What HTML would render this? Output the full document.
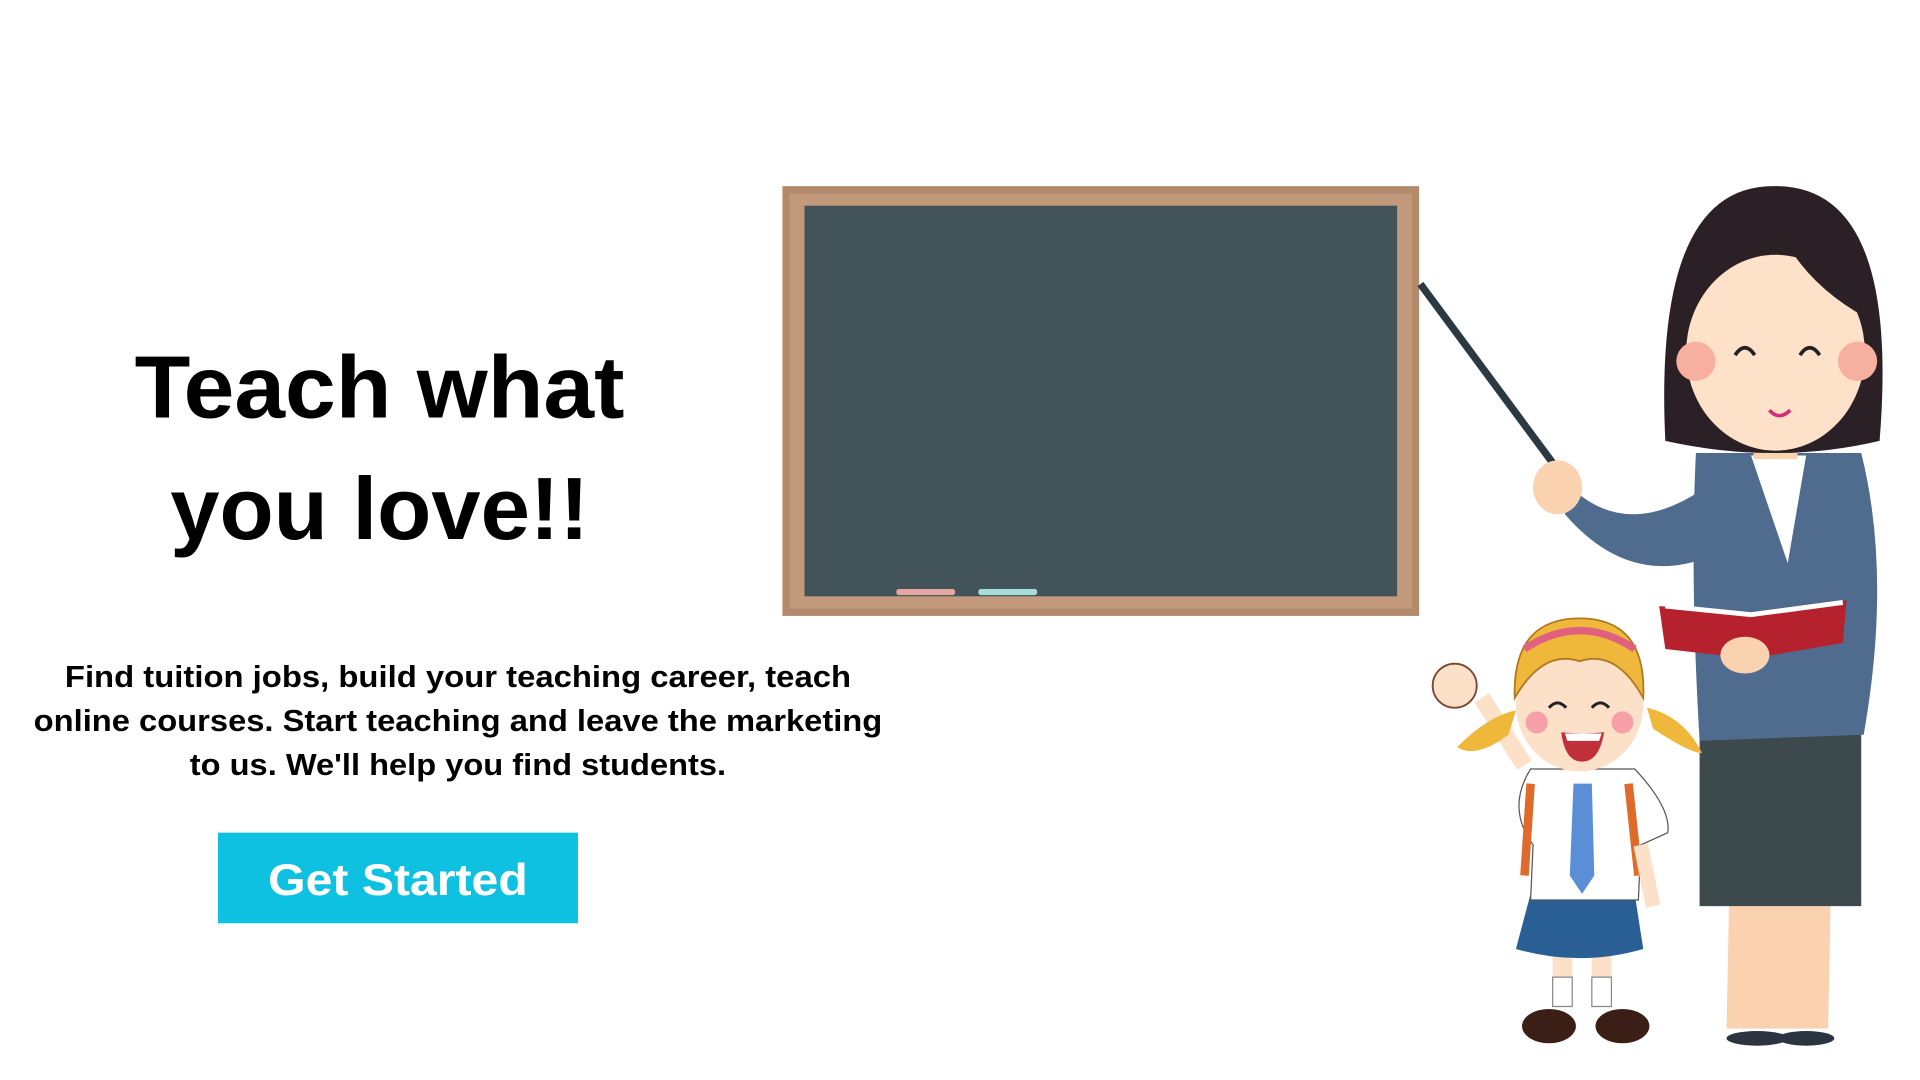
<!DOCTYPE html>
<html><head><meta charset="utf-8"><style>
html,body{margin:0;padding:0;background:#fff;width:1920px;height:1080px;overflow:hidden}
svg{display:block}
text{font-family:"Liberation Sans",sans-serif;font-weight:bold}
</style></head><body>
<svg width="1920" height="1080" viewBox="0 0 1568 882" preserveAspectRatio="none">
<rect width="1568" height="882" fill="#fff"/>
<text x="310" y="341" font-size="72" text-anchor="middle" textLength="400" lengthAdjust="spacingAndGlyphs" fill="#000">Teach what</text>
<text x="310" y="440" font-size="72" text-anchor="middle" textLength="342" lengthAdjust="spacingAndGlyphs" fill="#000">you love!!</text>
<g font-size="25" fill="#000" text-anchor="middle">
<text x="374" y="561" textLength="642" lengthAdjust="spacingAndGlyphs">Find tuition jobs, build your teaching career, teach</text>
<text x="374" y="597" textLength="693" lengthAdjust="spacingAndGlyphs">online courses. Start teaching and leave the marketing</text>
<text x="374" y="633" textLength="438" lengthAdjust="spacingAndGlyphs">to us. We'll help you find students.</text>
</g>
<rect x="178" y="680" width="294" height="74" fill="#0fc1e0"/>
<text x="325" y="731" font-size="36" fill="#fff" text-anchor="middle" textLength="212" lengthAdjust="spacingAndGlyphs">Get Started</text>
<rect x="639" y="152" width="520" height="351" fill="#b48a6c"/>
<rect x="645" y="158" width="508" height="339" fill="#c29a7b"/>
<rect x="657" y="168" width="484" height="319" fill="#42535a"/>
<rect x="732" y="481" width="48" height="5" rx="2" fill="#e6a6a0"/>
<rect x="799" y="481" width="48" height="5" rx="2" fill="#a6dcdc"/>
<line x1="1160" y1="232" x2="1268" y2="378" stroke="#2b3a42" stroke-width="6"/>
<path d="M1410 840 L1412 740 L1495 740 L1493 840Z" fill="#fbd2b0"/>
<ellipse cx="1435" cy="848" rx="25" ry="6" fill="#2b3440"/>
<ellipse cx="1475" cy="848" rx="23" ry="6" fill="#2b3440"/>
<rect x="1388" y="598" width="132" height="142" fill="#3c4a4e"/>
<path d="M1385 370 L1520 370 Q1545 470 1522 600 L1388 605 Q1380 470 1385 370Z" fill="#4f6b8e"/>
<path d="M1430 372 L1475 372 L1460 460 Z" fill="#fff"/>
<path d="M1390 400 Q1330 440 1285 400 L1278 420 Q1330 480 1395 455Z" fill="#4f6b8e"/>
<ellipse cx="1272" cy="398" rx="20" ry="22" fill="#fbd2b0"/>
<path d="M1355 495 L1430 500 L1508 490 L1505 525 L1430 538 L1360 530Z" fill="#b5222e"/>
<path d="M1360 495 L1430 502 L1505 492" stroke="#fff" stroke-width="4" fill="none"/>
<ellipse cx="1425" cy="535" rx="20" ry="15" fill="#fbd2b0"/>
<rect x="1432" y="345" width="36" height="30" fill="#fbd2b0"/>
<path d="M1360 360 Q1350 150 1450 152 Q1552 152 1535 360 Q1450 380 1360 360Z" fill="#2b2026"/>
<ellipse cx="1450" cy="288" rx="73" ry="80" fill="#fde1c8"/>
<path d="M1378 260 Q1400 210 1450 180 Q1470 230 1525 260 Q1525 180 1450 175 Q1380 180 1378 260Z" fill="#2b2026"/>
<circle cx="1385" cy="295" r="16" fill="#f7b0a0"/>
<circle cx="1517" cy="295" r="16" fill="#f7b0a0"/>
<path d="M1417 290 Q1425 278 1433 290 M1470 290 Q1478 278 1486 290" stroke="#222" stroke-width="3" fill="none"/>
<path d="M1445 335 Q1453 344 1462 335" stroke="#d0307a" stroke-width="3" fill="none"/>
<path d="M1268 775 L1268 800 L1284 800 L1284 775Z M1300 775 L1300 800 L1316 800 L1316 775Z" fill="#fde0c8"/>
<path d="M1268 798 L1268 822 L1284 822 L1284 798Z M1300 798 L1300 822 L1316 822 L1316 798Z" fill="#fff" stroke="#888" stroke-width="1"/>
<ellipse cx="1265" cy="838" rx="22" ry="14" fill="#3b1f17"/>
<ellipse cx="1325" cy="838" rx="22" ry="14" fill="#3b1f17"/>
<path d="M1250 730 L1335 730 L1342 775 Q1290 790 1238 775Z" fill="#2a5f96"/>
<path d="M1250 628 L1335 628 Q1365 660 1362 680 L1340 690 L1338 735 L1250 735 L1252 690 Q1230 660 1250 628Z" fill="#fff" stroke="#555" stroke-width="1"/>
<path d="M1285 640 L1300 640 L1302 715 L1292 730 L1282 715Z" fill="#5a8fd8"/>
<path d="M1250 640 L1245 715 M1330 640 L1338 715" stroke="#e06a2a" stroke-width="7"/>
<path d="M1245 625 L1210 570" stroke="#fde0c8" stroke-width="14"/>
<circle cx="1188" cy="560" r="18" fill="#fde0c8" stroke="#7a4a30" stroke-width="1.5"/>
<path d="M1340 690 L1350 740" stroke="#fde0c8" stroke-width="12"/>
<path d="M1232 600 Q1205 620 1190 610 Q1215 585 1238 580Z M1350 595 Q1380 615 1390 615 Q1375 585 1345 578Z" fill="#f0b83a"/>
<ellipse cx="1290" cy="575" rx="52" ry="55" fill="#fde0c8"/>
<path d="M1237 570 Q1235 505 1290 505 Q1345 505 1342 570 Q1320 530 1290 540 Q1260 530 1237 570Z" fill="#f0b83a" stroke="#b07a20" stroke-width="1.5"/>
<path d="M1245 530 Q1290 500 1335 530" stroke="#e06080" stroke-width="6" fill="none"/>
<circle cx="1255" cy="590" r="9" fill="#f7a0a8"/>
<circle cx="1325" cy="590" r="9" fill="#f7a0a8"/>
<path d="M1265 578 Q1272 570 1279 578 M1300 578 Q1307 570 1314 578" stroke="#222" stroke-width="2.5" fill="none"/>
<path d="M1275 598 Q1292 600 1310 598 Q1306 622 1292 622 Q1278 622 1275 598Z" fill="#c0303a"/>
<path d="M1278 599 L1308 599 L1306 605 L1280 605Z" fill="#fff"/>
</svg>
</body></html>
